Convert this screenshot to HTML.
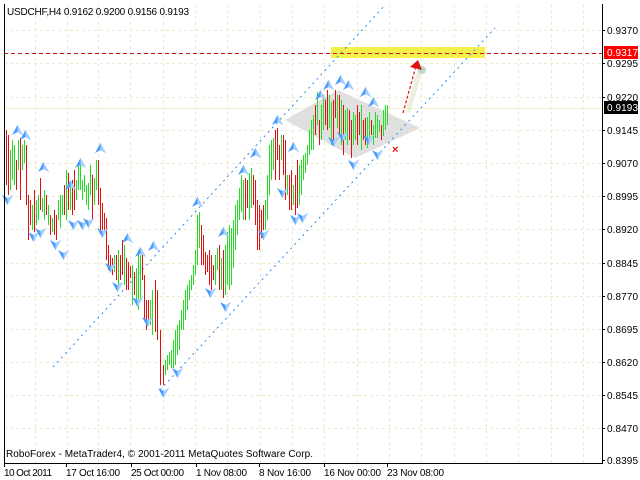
<!DOCTYPE html>
<html><head><meta charset="utf-8"><style>
html,body{margin:0;padding:0;background:#fff;}
svg{display:block;}
text{font-family:"Liberation Sans","DejaVu Sans",sans-serif;font-size:10px;fill:#000;}
.b{shape-rendering:crispEdges;}
</style></head><body>
<svg width="640" height="480" viewBox="0 0 640 480" xmlns="http://www.w3.org/2000/svg">
<defs>
<g id="u"><polygon points="5.5,0 11,10 5.5,7 0,10" fill="#4a9cff"/><polygon points="5.5,0 11,10 5.5,7" fill="#a8d0ff"/></g>
<g id="d"><polygon points="0,0 5.5,3 11,0 5.5,10" fill="#4a9cff"/><polygon points="5.5,3 11,0 5.5,10" fill="#a8d0ff"/></g>
</defs>
<rect width="640" height="480" fill="#fff"/>
<g stroke="#ecebd0" stroke-width="1" stroke-dasharray="3,3" class="b">
<path d="M4 30.5H602M4 63.5H602M4 97.5H602M4 130.5H602M4 163.5H602M4 196.5H602M4 229.5H602M4 263.5H602M4 296.5H602M4 329.5H602M4 362.5H602M4 395.5H602M4 428.5H602"/>
<path d="M35.5 4V463M67.5 4V463M98.5 4V463M130.5 4V463M163.5 4V463M195.5 4V463M227.5 4V463M260.5 4V463M292.5 4V463M324.5 4V463M357.5 4V463M389.5 4V463M421.5 4V463M454.5 4V463M486.5 4V463M518.5 4V463M551.5 4V463M583.5 4V463"/>
</g>
<path d="M4 108.5H602" stroke="#f2f2c8" stroke-width="1"/>
<rect x="331" y="47" width="154" height="11" fill="#f5f04a"/>
<path d="M4 53.5H602" stroke="#d01010" stroke-dasharray="4,3"/>
<polygon points="285,120 338,90 420,128 355,158" fill="#e0e0e0"/>
<g stroke="#2a8cf0" stroke-dasharray="2,4" stroke-width="1">
<path d="M53 367L385 5"/><path d="M160 390L495 28"/>
</g>
<path class="b" stroke="#e01010" stroke-width="1" fill="none" d="M4.5 90V170M6.5 130V185M8.5 135V195M16.5 160V190M20.5 138V200M26.5 145V205M28.5 195V240M30.5 200V225M34.5 190V232M40.5 178V210M46.5 195V215M50.5 215V235M54.5 210V235M56.5 215V240M64.5 185V215M68.5 173V210M72.5 180V215M74.5 170V210M92.5 175V220M98.5 160V205M100.5 188V230M102.5 203V230M104.5 213V230M106.5 218V260M108.5 245V270M110.5 255V270M112.5 258V275M116.5 255V280M120.5 255V280M122.5 240V275M126.5 258V290M128.5 262V290M130.5 266V278M134.5 272V295M142.5 255V280M144.5 275V320M146.5 300V330M148.5 300V325M155.5 280V332M157.5 290V340M160.5 330V385M163.5 365V385M201.5 225V265M203.5 235V265M205.5 252V275M207.5 255V272M209.5 250V285M211.5 255V290M213.5 265V280M219.5 245V290M223.5 250V298M245.5 178V220M247.5 180V208M253.5 175V205M255.5 180V225M257.5 200V250M259.5 205V250M261.5 210V238M263.5 205V230M275.5 130V180M277.5 128V160M279.5 145V180M283.5 135V175M285.5 140V200M289.5 175V210M291.5 170V210M295.5 175V215M297.5 160V208M315.5 105V135M319.5 120V145M325.5 100V125M327.5 90V130M333.5 100V140M335.5 90V118M339.5 95V135M343.5 105V155M349.5 110V140M351.5 120V158M357.5 105V145M359.5 112V135M363.5 120V140M365.5 118V145M371.5 120V135M381.5 125V140"/>
<path class="b" stroke="#22dd22" stroke-width="1" fill="none" d="M10.5 150V190M12.5 140V180M14.5 145V185M18.5 140V170M22.5 145V170M24.5 140V163M32.5 205V230M36.5 200V225M38.5 195V220M42.5 198V212M44.5 190V220M48.5 205V225M52.5 218V232M58.5 200V220M60.5 195V228M62.5 195V215M66.5 170V220M70.5 185V210M76.5 180V200M78.5 163V190M80.5 160V190M82.5 180V200M84.5 175V192M86.5 185V205M88.5 183V210M90.5 165V195M94.5 178V205M96.5 160V190M114.5 255V272M118.5 250V290M124.5 245V285M132.5 265V305M136.5 268V300M138.5 250V310M140.5 255V300M150.5 300V325M152.5 290V335M165.5 360V375M167.5 355V370M169.5 352V365M171.5 350V368M173.5 340V368M175.5 330V365M177.5 325V355M179.5 320V350M181.5 310V330M183.5 300V330M185.5 290V320M187.5 285V310M189.5 280V300M191.5 275V290M193.5 265V285M195.5 250V275M197.5 215V265M199.5 212V248M215.5 255V285M217.5 248V270M221.5 258V290M225.5 245V295M227.5 232V285M229.5 225V290M231.5 228V285M233.5 220V268M235.5 205V250M237.5 200V235M239.5 188V220M241.5 175V212M243.5 180V220M249.5 173V220M251.5 168V208M265.5 200V230M267.5 175V220M269.5 145V195M271.5 140V180M273.5 138V170M281.5 135V160M287.5 175V195M293.5 185V205M299.5 165V205M301.5 160V195M303.5 155V180M305.5 153V173M307.5 145V165M309.5 130V155M311.5 120V150M313.5 115V150M317.5 92V125M321.5 105V140M323.5 95V130M329.5 95V128M331.5 102V145M337.5 95V128M341.5 100V145M345.5 110V140M347.5 108V145M353.5 112V145M355.5 115V140M361.5 105V150M367.5 117V148M369.5 112V140M373.5 125V145M375.5 112V138M377.5 115V138M379.5 120V132M383.5 110V136M385.5 105V130M387.5 105V125"/>
<g>
<use href="#u" x="12" y="125"/><use href="#u" x="20" y="130"/><use href="#u" x="38" y="162"/><use href="#u" x="65" y="180"/><use href="#u" x="75" y="158"/><use href="#u" x="95" y="143"/><use href="#u" x="122" y="233"/><use href="#u" x="135" y="247"/><use href="#u" x="148" y="241"/><use href="#u" x="192" y="197"/><use href="#u" x="218" y="227"/><use href="#u" x="238" y="165"/><use href="#u" x="250" y="148"/><use href="#u" x="272" y="115"/><use href="#u" x="288" y="142"/><use href="#u" x="315" y="90"/><use href="#u" x="323" y="80"/><use href="#u" x="335" y="75"/><use href="#u" x="343" y="80"/><use href="#u" x="360" y="87"/><use href="#u" x="368" y="97"/>
<use href="#d" x="2" y="195"/><use href="#d" x="28" y="232"/><use href="#d" x="35" y="228"/><use href="#d" x="50" y="240"/><use href="#d" x="58" y="250"/><use href="#d" x="68" y="220"/><use href="#d" x="77" y="220"/><use href="#d" x="83" y="218"/><use href="#d" x="97" y="228"/><use href="#d" x="105" y="263"/><use href="#d" x="112" y="282"/><use href="#d" x="132" y="297"/><use href="#d" x="142" y="317"/><use href="#d" x="158" y="388"/><use href="#d" x="172" y="368"/><use href="#d" x="205" y="288"/><use href="#d" x="220" y="302"/><use href="#d" x="258" y="230"/><use href="#d" x="277" y="188"/><use href="#d" x="290" y="215"/><use href="#d" x="297" y="213"/><use href="#d" x="328" y="137"/><use href="#d" x="337" y="132"/><use href="#d" x="363" y="135"/><use href="#d" x="372" y="150"/><use href="#d" x="348" y="160"/>
</g>
<path d="M408 112L420 70" stroke="#e8ecd8" stroke-width="5" opacity="0.8"/>
<circle cx="422" cy="70" r="4" fill="#b8d8c8"/>
<path d="M403 113L416 66" stroke="#e01010" stroke-dasharray="3,2" stroke-width="1.2"/>
<polygon points="418,60 422,70 410,67" fill="#e01010"/>
<text x="392" y="153" style="fill:#e01010;font-size:11px;font-weight:bold">×</text>
<path class="b" d="M4.5 4V463.5H602.5V4" stroke="#000" fill="none"/>
<g stroke="#000" class="b"><path d="M602 30.5h3M602 63.5h3M602 97.5h3M602 130.5h3M602 163.5h3M602 196.5h3M602 229.5h3M602 263.5h3M602 296.5h3M602 329.5h3M602 362.5h3M602 395.5h3M602 428.5h3M602 460.5h3"/>
<path d="M4.5 463v4M66.5 463v4M131.5 463v4M196.5 463v4M259.5 463v4M324.5 463v4M387.5 463v4"/></g>
<g>
<text x="607" y="34" textLength="31">0.9370</text><text x="607" y="67" textLength="31">0.9295</text><text x="607" y="101" textLength="31">0.9220</text><text x="607" y="134" textLength="31">0.9145</text><text x="607" y="167" textLength="31">0.9070</text><text x="607" y="200" textLength="31">0.8995</text><text x="607" y="233" textLength="31">0.8920</text><text x="607" y="267" textLength="31">0.8845</text><text x="607" y="300" textLength="31">0.8770</text><text x="607" y="333" textLength="31">0.8695</text><text x="607" y="366" textLength="31">0.8620</text><text x="607" y="399" textLength="31">0.8545</text><text x="607" y="432" textLength="31">0.8470</text><text x="607" y="464" textLength="31">0.8395</text>
</g>
<rect x="604" y="46" width="34" height="13" fill="#ff0000"/><text x="607" y="56" textLength="31" style="fill:#fff">0.9317</text>
<rect x="604" y="101" width="34" height="13" fill="#000"/><text x="607" y="111" textLength="31" style="fill:#fff">0.9193</text>
<text x="7" y="15" textLength="182">USDCHF,H4  0.9162 0.9200 0.9156 0.9193</text>
<text x="6" y="457" textLength="307">RoboForex - MetaTrader4, © 2001-2011 MetaQuotes Software Corp.</text>
<g>
<text x="4" y="476" textLength="48">10 Oct 2011</text><text x="66" y="476" textLength="54">17 Oct 16:00</text><text x="131" y="476" textLength="53">25 Oct 00:00</text><text x="196" y="476" textLength="51">1 Nov 08:00</text><text x="259" y="476" textLength="52">8 Nov 16:00</text><text x="324" y="476" textLength="57">16 Nov 00:00</text><text x="387" y="476" textLength="57">23 Nov 08:00</text>
</g>
</svg>
</body></html>
